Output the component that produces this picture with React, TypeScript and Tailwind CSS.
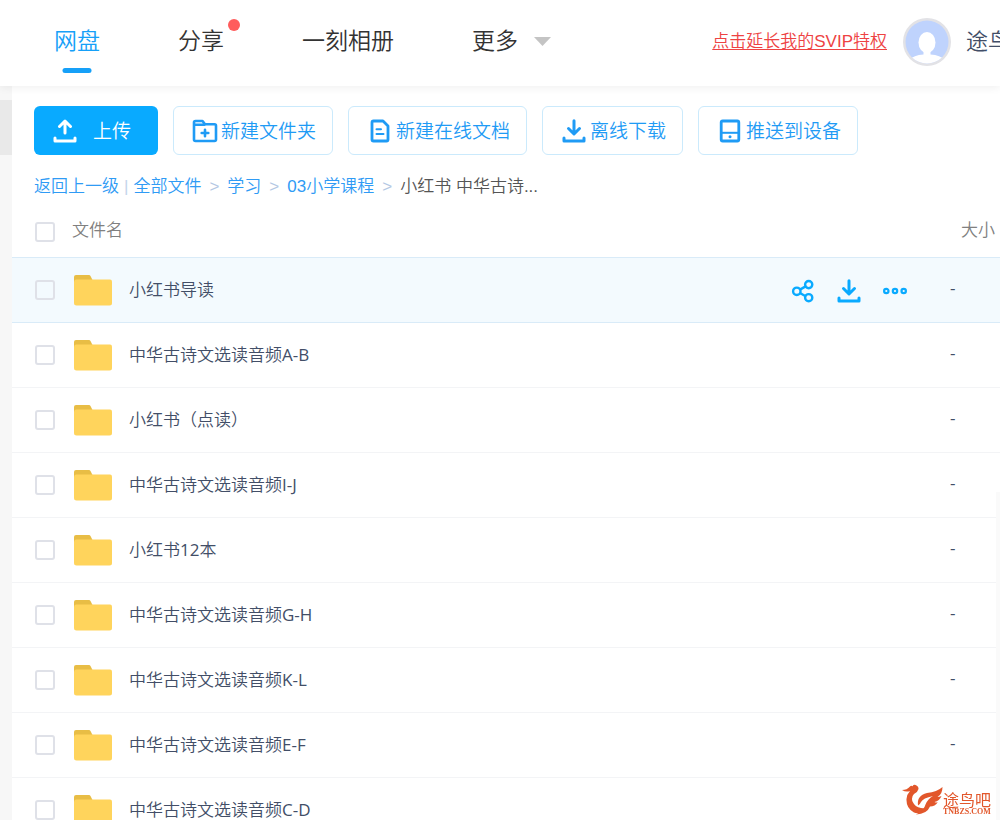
import type { ReactNode } from 'react';

const files = [
  { name: '小红书导读', size: '-' },
  { name: '中华古诗文选读音频A-B', size: '-' },
  { name: '小红书（点读）', size: '-' },
  { name: '中华古诗文选读音频I-J', size: '-' },
  { name: '小红书12本', size: '-' },
  { name: '中华古诗文选读音频G-H', size: '-' },
  { name: '中华古诗文选读音频K-L', size: '-' },
  { name: '中华古诗文选读音频E-F', size: '-' },
  { name: '中华古诗文选读音频C-D', size: '' },
];

function TrayIcon({ up = false }: { up?: boolean }) {
  return (
    <svg viewBox="0 0 24 24" className="size-6 shrink-0" fill="none" stroke="currentColor" strokeWidth="3" strokeLinecap="round" strokeLinejoin="round" aria-hidden="true">
      {up ? <path d="M12 14V3M6.500 7.500 12 2l5.500 5.500" /> : <path d="M12 1.800V14.500M6.500 9.500 12 15l5.500-5.500" />}
      <path d="M2 19v3h20v-3" />
    </svg>
  );
}

function NewFolderIcon() {
  return (
    <svg viewBox="0 0 26 24" className="h-6 w-[26px] shrink-0" fill="none" stroke="currentColor" strokeWidth="2.600" strokeLinecap="round" strokeLinejoin="round" aria-hidden="true">
      <path d="M2 20.500V3.500q0-1.500 1.500-1.500h7l2.500 3.300h9.500q1.500 0 1.500 1.500v13.700q0 1.500-1.500 1.500h-19Q2 22 2 20.500ZM2.500 5.800h10M13 10.700v6.600M9.700 14h6.600" />
    </svg>
  );
}

function DocIcon() {
  return (
    <svg viewBox="0 0 20 24" className="h-6 w-5 shrink-0" fill="none" stroke="currentColor" strokeWidth="2.800" strokeLinecap="round" strokeLinejoin="round" aria-hidden="true">
      <path d="M3.500 2h9.500l5 5v13.500q0 1.500-1.500 1.500h-13Q2 22 2 20.500v-17Q2 2 3.500 2Z" />
      <path d="M6.500 10.300h4.500M6.500 15h7" strokeWidth="2" />
    </svg>
  );
}

function DeviceIcon() {
  return (
    <svg viewBox="0 0 22 24" className="h-6 w-[22px] shrink-0" fill="none" stroke="currentColor" strokeWidth="2.800" strokeLinejoin="round" aria-hidden="true">
      <rect x="2.200" y="2" width="17.600" height="20" rx="1.500" />
      <path d="M2.200 13.800h17.600" strokeWidth="2" />
      <circle cx="11" cy="17.800" r="1.500" fill="currentColor" stroke="none" />
    </svg>
  );
}

function ShareIcon() {
  return (
    <svg viewBox="0 0 24 24" className="size-6" fill="none" stroke="currentColor" strokeWidth="2.400" aria-hidden="true">
      <circle cx="5.800" cy="12.300" r="3.700" />
      <circle cx="17.700" cy="5.600" r="3.600" />
      <circle cx="17.700" cy="18.700" r="3.600" />
      <path d="m9 10.600 5.600-3.200M9 14l5.600 3.200" />
    </svg>
  );
}

function DotsIcon() {
  return (
    <svg viewBox="0 0 24 24" className="size-6" fill="none" stroke="currentColor" strokeWidth="2.200" aria-hidden="true">
      <circle cx="3.300" cy="12" r="2.200" />
      <circle cx="12" cy="12" r="2.200" />
      <circle cx="20.700" cy="12" r="2.200" />
    </svg>
  );
}

function FolderIcon() {
  return (
    <svg viewBox="0 0 38 32" className="block h-8 w-[38px]" aria-hidden="true">
      <path d="M0 3q0-2 2-2h13q1 0 1.500 1l2 4V12H0Z" fill="#e8bd45" />
      <path d="M0 8q0-2.500 2-2.500h34q2 0 2 2V29q0 2.500-2.500 2.500h-33Q0 31.500 0 29Z" fill="#ffd45c" />
    </svg>
  );
}

function Avatar() {
  return (
    <svg viewBox="0 0 48 48" className="size-12 shrink-0" role="img" aria-label="头像">
      <clipPath id="face">
        <circle cx="24" cy="24" r="21.500" />
      </clipPath>
      <circle cx="24" cy="24" r="24" fill="#e2e2e6" />
      <g clipPath="url(#face)">
        <rect width="48" height="48" fill="#bfd3fd" />
        <ellipse cx="24" cy="24.500" rx="8.500" ry="10.500" fill="#fff" />
        <path d="M20.500 31h7v5.500q10 .500 14 5.500v6h-35v-6q4-5 14-5.500Z" fill="#fff" />
      </g>
    </svg>
  );
}

function Tick({ label }: { label: string }) {
  return (
    <input
      type="checkbox"
      aria-label={label}
      className="block size-5 appearance-none rounded-[3px] border-2 border-[#dfe1e8] bg-transparent checked:bg-[#06a7ff]"
    />
  );
}

function ToolButton({ icon, children }: { icon: ReactNode; children: ReactNode }) {
  return (
    <button className="flex h-[49px] shrink-0 items-center gap-[3px] rounded-md border border-[#cbeafc] pr-4 pl-[18px] text-[#1f9bf5]">
      <span className="flex w-[26px] justify-center">{icon}</span>
      <span className="pt-[3px]">{children}</span>
    </button>
  );
}

function Crumb({ children }: { children: ReactNode }) {
  return (
    <a href="#" className="text-[#2f9bf5]">
      {children}
    </a>
  );
}

function Separator() {
  return <span className="px-2 text-[#b4c8e4]">&gt;</span>;
}

// Latin letters and digits need a heavier weight to sit evenly beside the Chinese glyphs.
function FileName({ name }: { name: string }) {
  return (
    <a href="#">
      {name.split(/([A-Z0-9-]+)/).map((part, i) =>
        i % 2 ? (
          <span key={i} className="font-normal">
            {part}
          </span>
        ) : (
          part
        ),
      )}
    </a>
  );
}

function SiteMark() {
  return (
    <div className="fixed right-[9px] bottom-0 flex h-9 items-start text-[#e2572b]">
      <svg viewBox="0 0 41 32" className="h-8 w-[41px]" fill="currentColor" aria-hidden="true">
        <path d="M0 6q5 0 8-3.500Q9 1 10.500 2.200 12-.200 14.500 1.500 17.500 3 16 6q-.500 2.500-4 4-3 3-1.500 7.500Q13 23 19 24l4 .500Q18 31 12 28.500 4 24.500 4.500 15 5 10 8 7 4 8.500 0 6Z" />
        <path d="M16 21.500Q14.500 11.500 25 9q10-1 15.500-6Q40.500 10 35.500 13q2 0 4-1-2 5-7 6 2 1 3.500 0-3 4.500-8 4.500-3 7.500-14 8 8-4 9.500-10Q26 14.500 31 12q-10 2-12 6-1 2.500-3 3.500Z" />
      </svg>
      <div className="flex flex-col pt-[7px]">
        <span className="font-['Noto_Sans_CJK_SC',sans-serif] text-base leading-4 font-normal">途鸟吧</span>
        <span className="font-['Liberation_Serif',serif] text-[8px] leading-[10px] font-bold">TNBZS.COM</span>
      </div>
    </div>
  );
}

export default function App() {
  return (
    <div className="flex h-screen flex-col overflow-hidden bg-white font-['Liberation_Sans','Noto_Sans_CJK_SC',sans-serif] font-[350] text-[#424e67]">
      <header className="z-10 flex h-[86px] shrink-0 items-center justify-between pb-1 pl-[54px] shadow-[0_2px_8px_rgba(0,0,0,0.06)]">
        <nav className="flex items-center gap-[78px] text-[23px] leading-8 whitespace-nowrap text-[#333]">
          <a href="#" className="relative text-[#16a0f8]">
            网盘
            <span className="absolute top-[43px] left-1/2 h-[5px] w-[29px] -translate-x-1/2 rounded-sm bg-[#16a0f8]" />
          </a>
          <a href="#" className="relative">
            分享
            <span className="absolute -top-1.5 -right-4 size-3 rounded-full bg-[#ff5c5c]" />
          </a>
          <a href="#">一刻相册</a>
          <a href="#" className="flex items-center gap-4">
            更多
            <svg viewBox="0 0 17 9" className="h-[9px] w-[17px]" fill="#c4c4c4" aria-hidden="true">
              <path d="M0 0h17L8.500 9Z" />
            </svg>
          </a>
        </nav>
        <div className="flex items-center pt-0.5 whitespace-nowrap">
          <a href="#" className="mr-4 text-[17px] text-[#ee4343] underline underline-offset-2">
            点击延长我的SVIP特权
          </a>
          <Avatar />
          <span className="ml-[15px] w-[34px] overflow-hidden text-[22px] leading-8">途鸟</span>
        </div>
      </header>

      <div className="flex min-h-0 flex-1">
        <aside className="w-3 shrink-0 bg-[#f7f7f7] pt-3.5">
          <div className="h-[55px] bg-[#e9e9e9]" />
        </aside>
        <main className="min-w-0 flex-1 overflow-hidden">
          <div className="flex gap-[15px] px-[22px] pt-5 text-[19px] whitespace-nowrap">
            <button className="flex h-[49px] w-[124px] shrink-0 items-center gap-4 rounded-md bg-[#09aaff] pl-[19px] text-white">
              <TrayIcon up />
              <span className="pt-[3px]">上传</span>
            </button>
            <ToolButton icon={<NewFolderIcon />}>新建文件夹</ToolButton>
            <ToolButton icon={<DocIcon />}>新建在线文档</ToolButton>
            <ToolButton icon={<TrayIcon />}>离线下载</ToolButton>
            <ToolButton icon={<DeviceIcon />}>推送到设备</ToolButton>
          </div>

          <nav className="flex h-[62px] items-center px-[22px] pt-0.5 text-[17px] whitespace-nowrap">
            <Crumb>返回上一级</Crumb>
            <span className="px-[5px] text-[#c4d4ea]">|</span>
            <Crumb>全部文件</Crumb>
            <Separator />
            <Crumb>学习</Crumb>
            <Separator />
            <Crumb>03小学课程</Crumb>
            <Separator />
            <span className="text-[#555]">小红书 中华古诗...</span>
          </nav>

          <table className="w-full table-fixed border-collapse text-left font-['Open_Sans','Noto_Sans_CJK_SC',sans-serif] text-[17px]">
            <thead>
              <tr className="h-10 border-b border-[#d9ebf8] align-top text-[#808080]">
                <th className="w-[60px] pt-[5px] pl-[23px]">
                  <Tick label="全选" />
                </th>
                <th className="leading-[26px] font-[350]">文件名</th>
                <th className="w-[148px]" aria-label="操作" />
                <th className="w-[61px] pl-[22px] leading-[26px] font-[350] whitespace-nowrap">大小</th>
              </tr>
            </thead>
            <tbody>
              {files.map(({ name, size }, i) => (
                <tr
                  key={name}
                  className={i === 0 ? 'h-[65px] border-b border-[#d9ebf8] bg-[#f3fafe]' : 'h-[65px] border-b border-[#f3f4f6]'}
                >
                  <td className="pl-[23px]">
                    <Tick label={name} />
                  </td>
                  <td>
                    <div className="flex items-center gap-[17px] pl-0.5">
                      <FolderIcon />
                      <FileName name={name} />
                    </div>
                  </td>
                  <td>
                    {i === 0 && (
                      <div className="flex gap-[22px] pt-0.5 text-[#09aaff]">
                        <button aria-label="分享">
                          <ShareIcon />
                        </button>
                        <button aria-label="下载">
                          <TrayIcon />
                        </button>
                        <button aria-label="更多">
                          <DotsIcon />
                        </button>
                      </div>
                    )}
                  </td>
                  <td className="pb-1 pl-[11px] font-normal">{size}</td>
                </tr>
              ))}
            </tbody>
          </table>
        </main>
      </div>
      <div className="fixed top-[60%] right-0 bottom-0 w-1 bg-[#fafafa]" />
      <SiteMark />
    </div>
  );
}
